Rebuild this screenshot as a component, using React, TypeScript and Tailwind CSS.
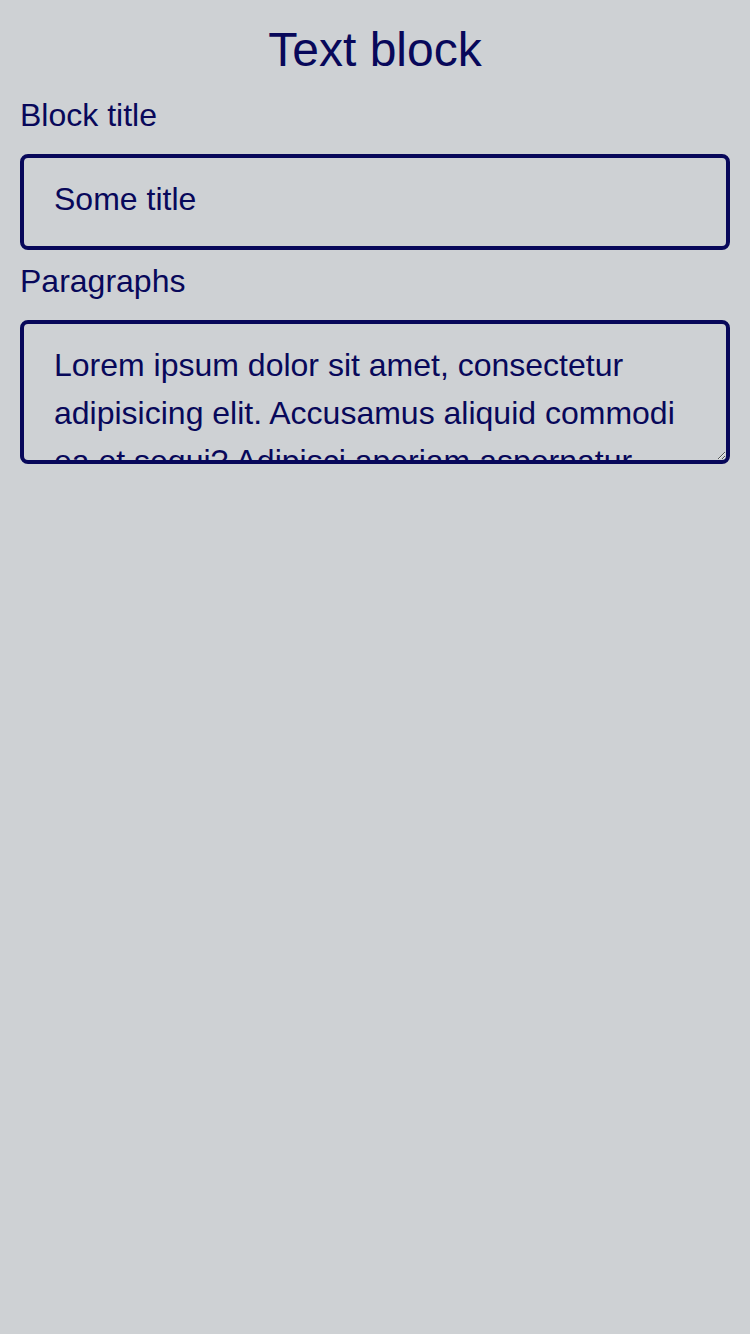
// Text block editor: a heading, a title field and a paragraphs textarea.

const LOREM =
  "Lorem ipsum dolor sit amet, consectetur adipisicing elit. Accusamus aliquid commodi ea et sequi? Adipisci aperiam aspernatur, blanditiis dolores eius fugit harum illum ipsam iure laboriosam molestiae nesciunt nulla quae quasi quod repellat sint tempora totam.";

export default function App() {
  return (
    <div
      className="min-h-[1334px] w-full bg-[#ced1d4] px-5 text-[#08085a]"
      style={{ fontFamily: '"Liberation Sans", Arial, sans-serif' }}
    >
      <h1 className="pt-[22px] text-center text-[48px] leading-[56px] font-normal">
        Text block
      </h1>

      <label className="mt-[19px] block text-[32px] leading-[36px]">Block title</label>
      <input
        type="text"
        defaultValue="Some title"
        className="mt-[21px] block h-[96px] w-full rounded-lg border-4 border-[#08085a] bg-transparent px-[30px] pb-[6px] text-[32px] text-[#08085a] outline-none"
      />

      <label className="mt-[13px] block text-[32px] leading-[36px]">Paragraphs</label>
      <textarea
        defaultValue={LOREM}
        className="mt-[21px] block h-[144px] w-full rounded-lg border-4 border-[#08085a] bg-transparent px-[30px] pt-[17px] pb-[18px] text-[32px] leading-[48px] text-[#08085a] outline-none [scrollbar-width:none]"
      />
    </div>
  );
}
